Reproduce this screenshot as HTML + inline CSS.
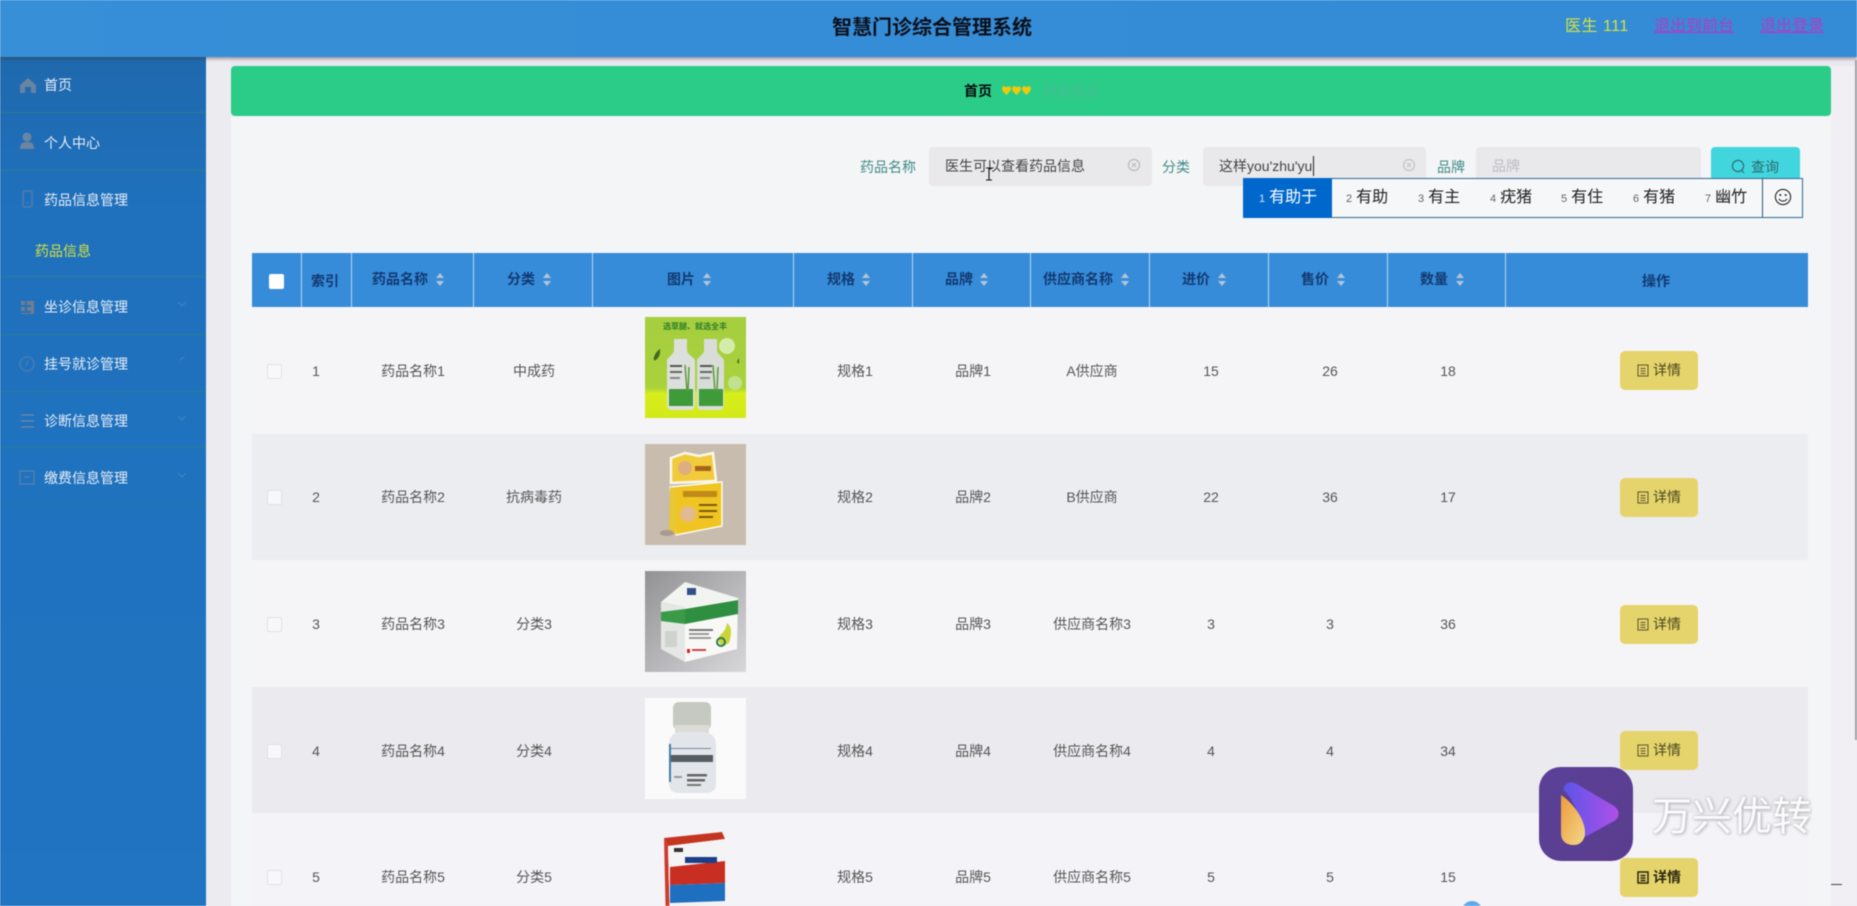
<!DOCTYPE html>
<html lang="zh"><head><meta charset="utf-8"><title>智慧门诊综合管理系统</title>
<style>
*{box-sizing:border-box}
html,body{margin:0;padding:0;width:1857px;height:906px;overflow:hidden;background:#eeedf1;font-family:"Liberation Sans","Noto Sans CJK SC",sans-serif;font-size:14px;color:#555}
#wrap{position:absolute;left:0;top:0;width:1857px;height:906px;overflow:hidden;filter:blur(.5px)}
.a{position:absolute;white-space:nowrap}
.c{position:absolute;white-space:nowrap;transform:translate(-50%,-50%);line-height:20px}
.nav{position:absolute;left:44px;color:#e8eef5;font-size:14px;line-height:20px;transform:translateY(-50%);white-space:nowrap}
.sep{position:absolute;left:0;width:206px;height:1px;background:#2a7c92}
.th{position:absolute;top:253px;width:1px;height:54px;background:#b9d8f2}
.ht{position:absolute;top:279px;transform:translateY(-50%);line-height:20px;font-weight:bold;color:#123a72;font-size:14px;white-space:nowrap}
.ck{position:absolute;left:267px;width:15px;height:15px;background:#f8f8fa;border:1px solid #e2e2e6;border-radius:2px}
.btn{position:absolute;left:1620px;width:78px;height:39px;background:#e5d46b;border-radius:5px}
.btn svg{position:absolute;left:17px;top:13px}
.btn span{position:absolute;left:33px;top:9px;line-height:20px;color:#4a4520;font-size:14px}
.input{position:absolute;top:147px;height:39px;background:#e9e8ea;border-radius:4px}
.lab{position:absolute;top:157px;line-height:20px;color:#3f8a85;font-size:14px}
.ime{position:absolute;top:187px;font-size:16px;line-height:22px;color:#222;white-space:nowrap}
.ime i{font-style:normal;font-size:11px;color:#666;margin-right:4px}
</style></head><body><div id="wrap">

<!-- main background / panel -->
<div class="a" style="left:231px;top:116px;width:1600px;height:790px;background:#f4f5f7"></div>
<div class="a" style="left:207px;top:57px;width:24px;height:849px;background:#ecebef"></div>
<div class="a" style="left:231px;top:57px;width:1626px;height:9px;background:#e9e7ef"></div>
<div class="a" style="left:1831px;top:66px;width:26px;height:840px;background:#f1eff4"></div>

<!-- banner -->
<div class="a" style="left:231px;top:66px;width:1600px;height:50px;background:#2bcc88;border-radius:4px"></div>
<div class="c" style="left:978px;top:91px;color:#0a0a0a;font-weight:bold">首页</div>
<svg class="a" style="left:1002px;top:86px" width="30" height="10" viewBox="0 0 30 10"><g fill="#f0c80c"><path d="M0 2.500a2.400 2.400 0 0 1 4.500-1 2.400 2.400 0 0 1 4.500 1c0 2.500-3 4.800-4.500 6.500C3 7.300 0 5 0 2.500z"/><path d="M10 2.500a2.400 2.400 0 0 1 4.500-1 2.400 2.400 0 0 1 4.500 1c0 2.500-3 4.800-4.500 6.500C13 7.300 10 5 10 2.500z"/><path d="M20 2.500a2.400 2.400 0 0 1 4.500-1 2.400 2.400 0 0 1 4.500 1c0 2.500-3 4.800-4.500 6.500C23 7.300 20 5 20 2.500z"/></g></svg>
<div class="c" style="left:1071px;top:91px;color:#46bd95">药品信息</div>

<!-- search -->
<div class="lab" style="left:860px">药品名称</div>
<div class="input" style="left:929px;width:223px"></div>
<div class="a" style="left:945px;top:156px;line-height:20px;color:#444">医生可以查看药品信息</div>
<svg class="a" style="left:1127px;top:158px" width="14" height="14" viewBox="0 0 14 14"><circle cx="7" cy="7" r="5.500" fill="none" stroke="#b9b9bd" stroke-width="1.200"/><path d="M5 5l4 4M9 5l-4 4" stroke="#b9b9bd" stroke-width="1.200"/></svg>
<div class="lab" style="left:1162px">分类</div>
<div class="input" style="left:1203px;width:223px"></div>
<div class="a" style="left:1219px;top:156px;line-height:20px;color:#444;border-right:1px solid #222;padding-right:1px"><span>这样you'zhu'yu</span></div>
<svg class="a" style="left:1402px;top:158px" width="14" height="14" viewBox="0 0 14 14"><circle cx="7" cy="7" r="5.500" fill="none" stroke="#c4c4c8" stroke-width="1.200"/><path d="M5 5l4 4M9 5l-4 4" stroke="#c4c4c8" stroke-width="1.200"/></svg>
<div class="lab" style="left:1437px">品牌</div>
<div class="input" style="left:1476px;width:225px"></div>
<div class="a" style="left:1492px;top:156px;line-height:20px;color:#bdbdc2">品牌</div>
<div class="a" style="left:1711px;top:147px;width:89px;height:39px;background:#41d6dd;border-radius:4px"></div>
<svg class="a" style="left:1731px;top:159px" width="15" height="16" viewBox="0 0 15 16"><circle cx="7" cy="7" r="5.600" fill="none" stroke="#2b6f78" stroke-width="1.200"/><path d="M10.500 11.500l2.500 2.500" stroke="#2b6f78" stroke-width="1.200"/></svg>
<div class="a" style="left:1751px;top:157px;line-height:20px;color:#2c6a70">查询</div>

<!-- IME -->
<div class="a" style="left:1243px;top:178px;width:560px;height:40px;background:#f6f7f8;border:1px solid #2a6a98"></div>
<div class="a" style="left:1243px;top:178px;width:89px;height:40px;background:#0068cc"></div>
<div class="a" style="left:1762px;top:178px;width:1px;height:40px;background:#2a5a7a"></div>
<div class="ime" style="left:1259px;color:#fff"><i style="color:#cfe3f7">1</i>有助于</div>
<div class="ime" style="left:1346px"><i>2</i>有助</div>
<div class="ime" style="left:1418px"><i>3</i>有主</div>
<div class="ime" style="left:1490px"><i>4</i>疣猪</div>
<div class="ime" style="left:1561px"><i>5</i>有住</div>
<div class="ime" style="left:1633px"><i>6</i>有猪</div>
<div class="ime" style="left:1705px"><i>7</i>幽竹</div>
<svg class="a" style="left:1774px;top:188px" width="18" height="18" viewBox="0 0 18 18"><circle cx="9" cy="9" r="7.600" fill="none" stroke="#222" stroke-width="1.100"/><circle cx="6.300" cy="7" r="1" fill="#222"/><circle cx="11.700" cy="7" r="1" fill="#222"/><path d="M5 10.800c1.400 3 6.600 3 8 0" fill="none" stroke="#222" stroke-width="1.100"/></svg>

<!-- I-beam cursor -->
<svg class="a" style="left:985px;top:167px" width="8" height="14" viewBox="0 0 8 14"><path d="M1 1h6M4 1v12M1 13h6" stroke="#111" stroke-width="1.100" fill="none"/></svg>

<!-- table rows -->
<div class="a" style="left:252px;top:307px;width:1556px;height:127px;background:#f5f5f7"></div>
<div class="a" style="left:252px;top:434px;width:1556px;height:126px;background:#ecedf1"></div>
<div class="a" style="left:252px;top:560px;width:1556px;height:127px;background:#f5f5f8"></div>
<div class="a" style="left:252px;top:687px;width:1556px;height:126px;background:#ebebef"></div>
<div class="a" style="left:252px;top:813px;width:1556px;height:93px;background:#f4f3f7"></div>

<!-- table head -->
<div class="a" style="left:252px;top:253px;width:1556px;height:54px;background:#368cd9"></div>
<div class="th" style="left:301px"></div><div class="th" style="left:351px"></div><div class="th" style="left:473px"></div><div class="th" style="left:592px"></div><div class="th" style="left:793px"></div><div class="th" style="left:912px"></div><div class="th" style="left:1030px"></div><div class="th" style="left:1149px"></div><div class="th" style="left:1268px"></div><div class="th" style="left:1387px"></div><div class="th" style="left:1505px"></div>
<div class="a" style="left:269px;top:274px;width:15px;height:15px;background:#fff;border-radius:2px"></div>
<div class="ht" style="left:311px;top:281px">索引</div>
<div class="ht" style="left:372px">药品名称</div>
<div class="ht" style="left:507px">分类</div>
<div class="ht" style="left:667px">图片</div>
<div class="ht" style="left:827px">规格</div>
<div class="ht" style="left:945px">品牌</div>
<div class="ht" style="left:1043px">供应商名称</div>
<div class="ht" style="left:1182px">进价</div>
<div class="ht" style="left:1301px">售价</div>
<div class="ht" style="left:1420px">数量</div>
<div class="ht" style="left:1642px;top:281px">操作</div>
<svg class="a" style="left:0;top:0" width="1857" height="300"><g fill="#b4c4d8"><path d="M436 278l4-5 4 5zM436 281l4 5 4-5z"/><path d="M543 278l4-5 4 5zM543 281l4 5 4-5z"/><path d="M703 278l4-5 4 5zM703 281l4 5 4-5z"/><path d="M862 278l4-5 4 5zM862 281l4 5 4-5z"/><path d="M980 278l4-5 4 5zM980 281l4 5 4-5z"/><path d="M1121 278l4-5 4 5zM1121 281l4 5 4-5z"/><path d="M1218 278l4-5 4 5zM1218 281l4 5 4-5z"/><path d="M1337 278l4-5 4 5zM1337 281l4 5 4-5z"/><path d="M1456 278l4-5 4 5zM1456 281l4 5 4-5z"/></g></svg>

<!-- row 1 -->
<div class="ck" style="top:364px"></div>
<div class="c" style="left:316px;top:371px">1</div><div class="c" style="left:413px;top:371px">药品名称1</div><div class="c" style="left:534px;top:371px">中成药</div><div class="c" style="left:855px;top:371px">规格1</div><div class="c" style="left:973px;top:371px">品牌1</div><div class="c" style="left:1092px;top:371px">A供应商</div><div class="c" style="left:1211px;top:371px">15</div><div class="c" style="left:1330px;top:371px">26</div><div class="c" style="left:1448px;top:371px">18</div>
<!-- row 2 -->
<div class="ck" style="top:490px"></div>
<div class="c" style="left:316px;top:497px">2</div><div class="c" style="left:413px;top:497px">药品名称2</div><div class="c" style="left:534px;top:497px">抗病毒药</div><div class="c" style="left:855px;top:497px">规格2</div><div class="c" style="left:973px;top:497px">品牌2</div><div class="c" style="left:1092px;top:497px">B供应商</div><div class="c" style="left:1211px;top:497px">22</div><div class="c" style="left:1330px;top:497px">36</div><div class="c" style="left:1448px;top:497px">17</div>
<!-- row 3 -->
<div class="ck" style="top:617px"></div>
<div class="c" style="left:316px;top:624px">3</div><div class="c" style="left:413px;top:624px">药品名称3</div><div class="c" style="left:534px;top:624px">分类3</div><div class="c" style="left:855px;top:624px">规格3</div><div class="c" style="left:973px;top:624px">品牌3</div><div class="c" style="left:1092px;top:624px">供应商名称3</div><div class="c" style="left:1211px;top:624px">3</div><div class="c" style="left:1330px;top:624px">3</div><div class="c" style="left:1448px;top:624px">36</div>
<!-- row 4 -->
<div class="ck" style="top:744px"></div>
<div class="c" style="left:316px;top:751px">4</div><div class="c" style="left:413px;top:751px">药品名称4</div><div class="c" style="left:534px;top:751px">分类4</div><div class="c" style="left:855px;top:751px">规格4</div><div class="c" style="left:973px;top:751px">品牌4</div><div class="c" style="left:1092px;top:751px">供应商名称4</div><div class="c" style="left:1211px;top:751px">4</div><div class="c" style="left:1330px;top:751px">4</div><div class="c" style="left:1448px;top:751px">34</div>
<!-- row 5 -->
<div class="ck" style="top:870px"></div>
<div class="c" style="left:316px;top:877px">5</div><div class="c" style="left:413px;top:877px">药品名称5</div><div class="c" style="left:534px;top:877px">分类5</div><div class="c" style="left:855px;top:877px">规格5</div><div class="c" style="left:973px;top:877px">品牌5</div><div class="c" style="left:1092px;top:877px">供应商名称5</div><div class="c" style="left:1211px;top:877px">5</div><div class="c" style="left:1330px;top:877px">5</div><div class="c" style="left:1448px;top:877px">15</div>

<!-- product images -->
<svg class="a" style="left:645px;top:317px" width="101" height="101" viewBox="0 0 101 101">
<defs><linearGradient id="g1" x1="0" y1="0" x2="0" y2="1"><stop offset="0" stop-color="#a6ce40"/><stop offset=".7" stop-color="#a9d23a"/><stop offset=".76" stop-color="#d8ee1c"/><stop offset="1" stop-color="#d2ea18"/></linearGradient></defs>
<rect width="101" height="101" fill="url(#g1)"/>
<text x="50" y="12" font-size="8" font-weight="bold" fill="#2f7d28" text-anchor="middle" font-family="Liberation Sans,Noto Sans CJK SC,sans-serif">选草腿、就选全丰</text>
<path d="M22 44c0-4 7-6 7-11V22h13v11c0 5 8 7 8 11v44c0 3-2 5-5 5H27c-3 0-5-2-5-5z" fill="#dce0dc"/>
<path d="M52 44c0-4 7-6 7-11V22h13v11c0 5 7 7 7 11v44c0 3-2 5-5 5H57c-3 0-5-2-5-5z" fill="#d8ddd8"/>
<rect x="24" y="72" width="24" height="17" fill="#3f9a3a"/><rect x="54" y="72" width="24" height="17" fill="#3f9a3a"/>
<rect x="25" y="48" width="12" height="2" fill="#555"/><rect x="25" y="54" width="12" height="2" fill="#666"/><rect x="25" y="60" width="10" height="2" fill="#888"/><rect x="55" y="48" width="12" height="2" fill="#555"/><rect x="55" y="54" width="12" height="2" fill="#666"/><rect x="55" y="60" width="10" height="2" fill="#888"/>
<path d="M40 48l2 26M68 48l2 26M44 50l-1 24M73 50l-1 24" stroke="#5d9a3e" stroke-width="1.500"/>
<circle cx="82" cy="29" r="8" fill="#d4ecaa"/><circle cx="90" cy="66" r="7" fill="#c0e290"/>
<path d="M9 40c2-6 6-8 6-8s1 6-3 10c-2 2-4 2-3-2z" fill="#3d6b24"/><path d="M92 45c1-3 2-4 2-4v6z" fill="#3d6b24"/>
</svg>
<svg class="a" style="left:645px;top:444px" width="101" height="101" viewBox="0 0 101 101">
<rect width="101" height="101" fill="#c8bcae"/>
<path d="M26 14l14-5 14 3 14-3 3 28-45 2z" fill="#f2cb3c" stroke="#fbf8ea" stroke-width="2.500"/>
<circle cx="40" cy="24" r="7" fill="#dcae82"/>
<rect x="50" y="22" width="16" height="5" fill="#a8641a"/>
<path d="M25 43l52-5v44l-46 9z" fill="#f0c522" stroke="#fbfaf0" stroke-width="1.500"/>
<path d="M25 43l-1 42 7 6 1-46z" fill="#e8c634"/>
<circle cx="43" cy="70" r="8" fill="#e2ba90"/>
<rect x="38" y="47" width="34" height="6" fill="#c08a18"/><rect x="54" y="60" width="18" height="2" fill="#7a5a10"/><rect x="54" y="66" width="18" height="2" fill="#7a5a10"/><rect x="54" y="72" width="14" height="2" fill="#7a5a10"/>
<ellipse cx="22" cy="89" rx="7" ry="3" fill="#8f8679" opacity=".6"/>
</svg>
<svg class="a" style="left:645px;top:571px" width="101" height="101" viewBox="0 0 101 101">
<defs><linearGradient id="g3" x1="0" y1="0" x2="1" y2="1"><stop offset="0" stop-color="#929294"/><stop offset=".55" stop-color="#b9b9bc"/><stop offset="1" stop-color="#d8d8da"/></linearGradient></defs>
<rect width="101" height="101" fill="url(#g3)"/>
<path d="M16 31L40 11l53 16-53 9z" fill="#f2f4f2"/>
<path d="M16 31l24 5v55L16 78z" fill="#e4e7e4"/>
<path d="M40 36l53-9-1 51-52 13z" fill="#f8f9f7"/>
<path d="M40 38l53-9v14L40 53z" fill="#2f8f40"/>
<path d="M16 41l24-3v15L16 50z" fill="#3a9a48"/>
<rect x="42" y="17" width="9" height="7" fill="#34508c"/>
<rect x="44" y="58" width="24" height="2" fill="#777"/><rect x="44" y="62" width="20" height="2" fill="#999"/><rect x="44" y="66" width="22" height="2" fill="#999"/><rect x="42" y="78" width="3" height="4" fill="#d22"/><rect x="47" y="78" width="14" height="2" fill="#c44"/>
<path d="M82 52c6 4 4 14 2 20c-6 4-12 2-10-6c2-4 6-4 8-14z" fill="#c8d63a"/><circle cx="76" cy="71" r="4" fill="none" stroke="#2f7a50" stroke-width="2"/>
<rect x="20" y="60" width="12" height="16" fill="#cfd3cf"/>
</svg>
<svg class="a" style="left:645px;top:698px" width="101" height="101" viewBox="0 0 101 101">
<rect width="101" height="101" fill="#fafafa"/>
<rect x="28" y="4" width="38" height="28" rx="6" fill="#c6c8c2"/>
<rect x="30" y="27" width="34" height="8" fill="#dcdcd6"/>
<path d="M24 46c0-8 6-12 12-12h22c6 0 13 4 13 12v40c0 6-4 9-10 9H34c-6 0-10-3-10-9z" fill="#e2e6ea"/>
<rect x="26" y="57" width="42" height="7" fill="#555c62"/>
<rect x="24" y="46" width="2" height="38" fill="#3e7fa8"/>
<rect x="42" y="76" width="20" height="2.500" fill="#666"/><rect x="42" y="81" width="18" height="2.500" fill="#666"/><rect x="42" y="86" width="14" height="2" fill="#777"/><rect x="29" y="78" width="8" height="2" fill="#999"/><rect x="26" y="50" width="40" height="1" fill="#7a8a9a"/>
</svg>
<svg class="a" style="left:645px;top:825px" width="101" height="101" viewBox="0 0 101 101">
<path d="M19 13l58-6 3 7-57 7z" fill="#c53420"/>
<path d="M19 13l4 8 2 80h-4z" fill="#cf3a28"/>
<path d="M23 21l57-7v87H25z" fill="#f4f4f4"/>
<path d="M25 42l55-6v22l-55 2z" fill="#c92e22"/>
<path d="M25 60l55-2v18l-55 2z" fill="#1e6fc0"/>
<rect x="40" y="32" width="32" height="6" fill="#1b3f88"/>
<rect x="29" y="23" width="9" height="4" fill="#333"/>
</svg>

<!-- buttons -->
<div class="btn" style="top:351px"><svg width="12" height="13" viewBox="0 0 12 13"><rect x="1" y="1" width="10" height="11" fill="none" stroke="#5a5430"/><path d="M3.500 4.500h5M3.500 7h5M3.500 9.500h5" stroke="#5a5430"/></svg><span>详情</span></div>
<div class="btn" style="top:478px"><svg width="12" height="13" viewBox="0 0 12 13"><rect x="1" y="1" width="10" height="11" fill="none" stroke="#5a5430"/><path d="M3.500 4.500h5M3.500 7h5M3.500 9.500h5" stroke="#5a5430"/></svg><span>详情</span></div>
<div class="btn" style="top:605px"><svg width="12" height="13" viewBox="0 0 12 13"><rect x="1" y="1" width="10" height="11" fill="none" stroke="#5a5430"/><path d="M3.500 4.500h5M3.500 7h5M3.500 9.500h5" stroke="#5a5430"/></svg><span>详情</span></div>
<div class="btn" style="top:731px"><svg width="12" height="13" viewBox="0 0 12 13"><rect x="1" y="1" width="10" height="11" fill="none" stroke="#5a5430"/><path d="M3.500 4.500h5M3.500 7h5M3.500 9.500h5" stroke="#5a5430"/></svg><span>详情</span></div>
<div class="btn" style="top:858px"><svg width="12" height="13" viewBox="0 0 12 13"><rect x="1" y="1" width="10" height="11" fill="none" stroke="#2a2510" stroke-width="1.500"/><path d="M3.500 4.500h5M3.500 7h5M3.500 9.500h5" stroke="#2a2510" stroke-width="1.500"/></svg><span style="font-weight:bold;color:#2a2510">详情</span></div>

<!-- sidebar -->
<div class="a" style="left:0;top:57px;width:207px;height:849px;background:linear-gradient(180deg,#1f69ae 0,#1f71bd 18%,#2074c1 100%);border-right:1px solid #e4eef8"></div>
<div class="sep" style="top:112px"></div><div class="sep" style="top:170px"></div><div class="sep" style="top:276px"></div><div class="sep" style="top:334px"></div><div class="sep" style="top:391px"></div><div class="sep" style="top:447px"></div><div class="sep" style="top:503px;opacity:.5"></div>
<div class="nav" style="top:85px">首页</div>
<div class="nav" style="top:143px">个人中心</div>
<div class="nav" style="top:200px">药品信息管理</div>
<div class="nav" style="top:251px;left:35px;color:#d6e23e">药品信息</div>
<div class="nav" style="top:307px">坐诊信息管理</div>
<div class="nav" style="top:364px">挂号就诊管理</div>
<div class="nav" style="top:421px">诊断信息管理</div>
<div class="nav" style="top:478px">缴费信息管理</div>
<svg class="a" style="left:0;top:57px;opacity:.8" width="207" height="450" viewBox="0 57 207 450">
<g fill="#7d8a9e"><path d="M27 85l8-7 8 7v8h-5v-6h-6v6h-5z" transform="translate(-7 0)"/><circle cx="27" cy="137" r="4.500"/><path d="M20 149c0-6 3-7 7-7s7 1 7 7z"/></g>
<rect x="23" y="191" width="9" height="16" rx="1.500" fill="none" stroke="#5d7fa8" stroke-width="1.500"/><circle cx="27.500" cy="203" r="1" fill="#5d7fa8"/>
<g fill="#8a7f84"><rect x="21" y="301" width="4" height="4"/><rect x="27" y="301" width="4" height="4"/><rect x="21" y="307" width="4" height="4"/><rect x="27" y="307" width="4" height="4"/><rect x="21" y="313" width="10" height="1"/><rect x="31" y="301" width="3" height="13"/></g>
<circle cx="27" cy="364" r="7" fill="none" stroke="#5a80a8" stroke-width="1.300"/><path d="M28 360l-2 6" stroke="#5a80a8"/>
<path d="M21 415h13M21 421h13M21 427h13" stroke="#7e8aa0" stroke-width="1.400"/>
<rect x="20" y="471" width="14" height="13" fill="none" stroke="#6a85a8" stroke-width="1.200"/><path d="M24 477h6" stroke="#6a85a8"/>
<g fill="none" stroke="#4a86c0" stroke-width="1.200"><path d="M178 302l4 4 4-4"/><path d="M180 360l4-3"/><path d="M178 416l4 4 4-4"/><path d="M178 473l4 4 4-4"/></g>
</svg>

<!-- top bar -->
<div class="a" style="left:0;top:0;width:1857px;height:57px;background:linear-gradient(90deg,#378fd8,#348bd6);box-shadow:0 2px 3px rgba(60,60,50,.45)"></div>
<div class="c" style="left:932px;top:28px;color:#0b0f1a;font-size:20px;font-weight:bold;line-height:28px">智慧门诊综合管理系统</div>
<div class="a" style="left:1565px;top:16px;line-height:22px;font-size:16px;color:#d3e33f;letter-spacing:.5px">医生 111</div>
<div class="a" style="left:1654px;top:16px;line-height:22px;font-size:16px;color:#b23cc4;text-decoration:underline">退出到前台</div>
<div class="a" style="left:1760px;top:16px;line-height:22px;font-size:16px;color:#b23cc4;text-decoration:underline">退出登录</div>

<!-- scrollbar bits -->
<div class="a" style="left:1855px;top:60px;width:2px;height:680px;background:#9fa0a6"></div>
<div class="a" style="left:1831px;top:884px;width:11px;height:1px;background:#444"></div>
<div class="a" style="left:1462px;top:901px;width:20px;height:20px;border-radius:50%;background:#5ba9ea"></div>

<!-- watermark -->
<div class="a" style="left:1539px;top:767px;width:94px;height:94px;border-radius:22px;background:linear-gradient(135deg,#5a4198,#5b3d8e)"></div>
<svg class="a" style="left:1539px;top:767px" width="94" height="94" viewBox="0 0 94 94">
<defs><linearGradient id="p1" x1="0" y1="0" x2="1" y2="0"><stop offset="0" stop-color="#5a55e8"/><stop offset="1" stop-color="#b050e8"/></linearGradient><linearGradient id="p2" x1="0" y1="0" x2="1" y2="1"><stop offset="0" stop-color="#ee9a3a"/><stop offset="1" stop-color="#f2d88a"/></linearGradient></defs>
<path d="M24 22c2-6 7-8 12-6l39 23c6 4 6 12 0 15L46 70c-4-18-10-36-22-48z" fill="url(#p1)"/>
<path d="M22 28c12 8 24 24 24 38c0 6-4 12-11 12c-8 0-13-4-13-12z" fill="url(#p2)"/>
</svg>
<div class="a" style="left:1652px;top:794px;font-size:40px;line-height:46px;color:#fbfbfd;text-shadow:0 0 3px #bbb,1px 1px 3px #b5b5b8;width:160px;overflow:hidden">万兴优转</div>

</div></body></html>
